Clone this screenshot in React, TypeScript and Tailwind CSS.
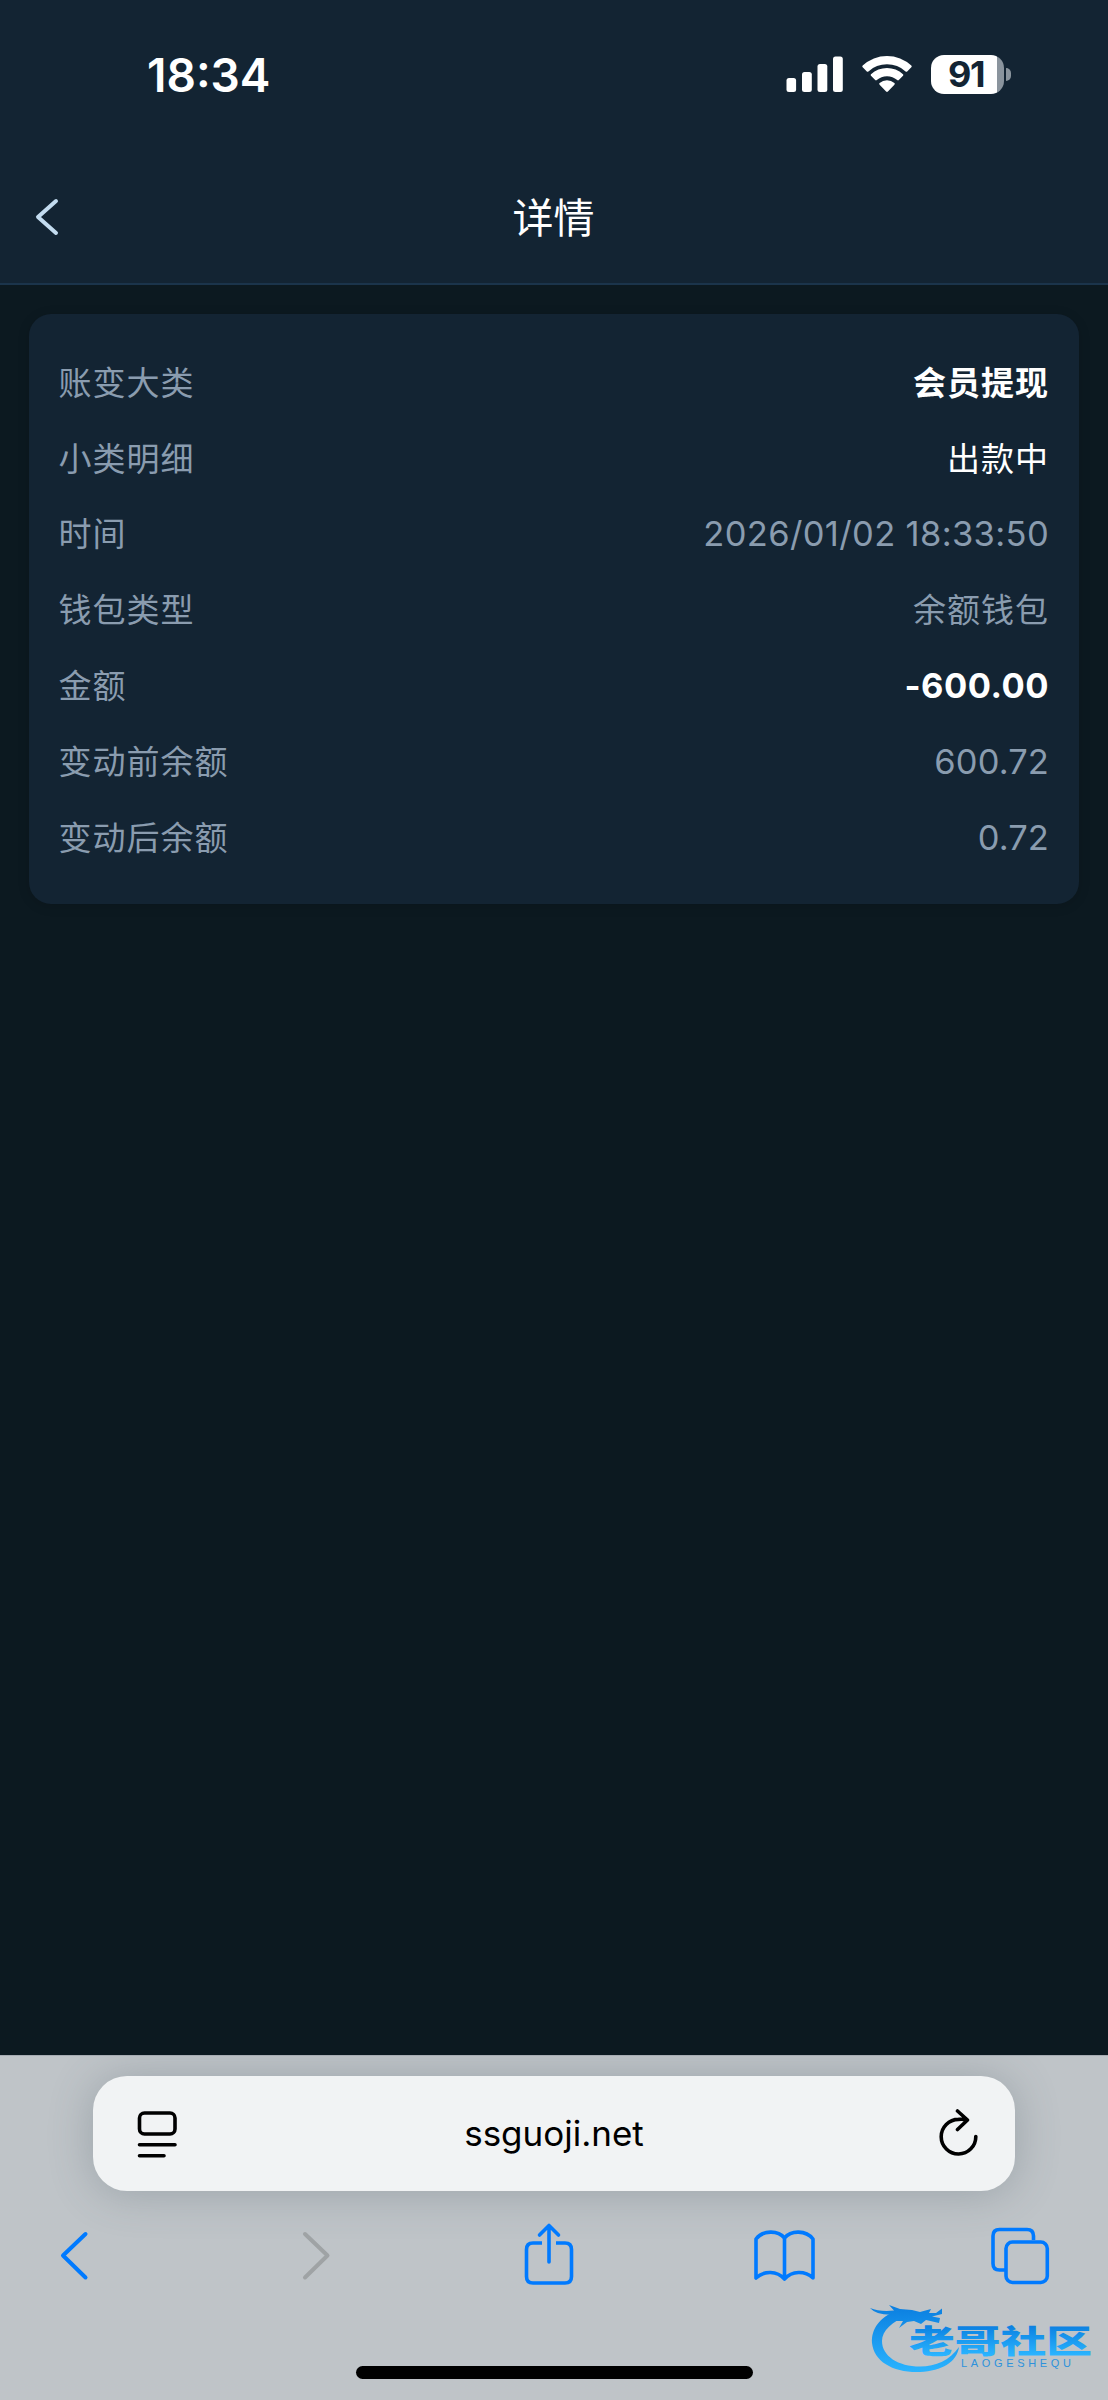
import React from "react";

interface DetailRow {
  label: string;
  value: string;
  style: string;
}

const rows: DetailRow[] = [
  { label: "账变大类", value: "会员提现", style: "pt-[3px] text-white font-bold" },
  { label: "小类明细", value: "出款中", style: "pt-[3px] text-white" },
  { label: "时间", value: "2026/01/02 18:33:50", style: "pt-px text-[34.5px] tracking-[0.35px]" },
  { label: "钱包类型", value: "余额钱包", style: "pt-[3px]" },
  { label: "金额", value: "-600.00", style: "pt-px text-[34.5px] tracking-[0.5px] text-white font-bold" },
  { label: "变动前余额", value: "600.72", style: "pt-px text-[34.5px] tracking-[0.1px]" },
  { label: "变动后余额", value: "0.72", style: "pt-px text-[34.5px] tracking-[0.1px]" },
];

const StatusBar: React.FC = () => (
  <div className="flex h-[148px] items-center justify-between pl-[147px] pr-[97px]">
    <span className="pt-[2px] text-[46px] font-semibold leading-none">18:34</span>
    <div className="flex items-center">
      <svg width="58" height="40" viewBox="786 54 58 40" fill="white">
        <rect x="786.5" y="78" width="9.6" height="14" rx="2.5" />
        <rect x="802" y="72" width="9.8" height="20" rx="2.5" />
        <rect x="817.5" y="64" width="9.8" height="28" rx="2.5" />
        <rect x="833" y="56.5" width="9.8" height="35.5" rx="2.5" />
      </svg>
      <svg className="ml-[17px]" width="52" height="40" viewBox="861 54 52 40" fill="white">
        <path d="M862.7 65.6a35.5 35.5 0 0 1 48.6 0q.8.8 0 1.6l-4.1 4.2q-.8.8-1.6 0a27.5 27.5 0 0 0-37.2 0q-.8.8-1.6 0l-4.1-4.2q-.8-.8 0-1.6z" />
        <path d="M871 74.2a23.6 23.6 0 0 1 32 0q.8.8 0 1.6l-4.2 4.3q-.8.8-1.6 0a15.2 15.2 0 0 0-20.4 0q-.8.8-1.6 0l-4.2-4.3q-.8-.8 0-1.6z" />
        <path d="M879.6 83a11.5 11.5 0 0 1 14.8 0q.9.8 0 1.7l-6.5 6.8q-.9.9-1.8 0l-6.5-6.8q-.9-.9 0-1.7z" />
      </svg>
      <div className="ml-[18px] flex h-[39px] w-[73px] items-center justify-center rounded-[13px] bg-linear-to-r from-white from-90% to-[#8a949d] to-90% pr-[3px]">
        <span className="text-[36px] font-bold leading-none tracking-[-1.5px] text-[#132433]">91</span>
      </div>
      <div className="ml-0.5 h-[13px] w-[5px] rounded-r-full bg-[#8a949d]" />
    </div>
  </div>
);

const CommunityLogo: React.FC = () => (
  <svg className="absolute left-[864px] top-[2296px]" width="236" height="82" viewBox="864 2296 236 82">
    <defs>
      <linearGradient id="ring" gradientUnits="userSpaceOnUse" x1="0" y1="2306" x2="0" y2="2372">
        <stop offset="0" stopColor="#0b7fe0" />
        <stop offset="1" stopColor="#2ab4ff" />
      </linearGradient>
      <linearGradient id="word" x1="0" y1="0" x2="0" y2="1">
        <stop offset="0.2" stopColor="#0b7fe0" />
        <stop offset="0.85" stopColor="#2ab4ff" />
      </linearGradient>
    </defs>
    <g fill="url(#ring)">
      <path d="M896 2311C880 2317 871 2329 872 2343C874 2362 894 2373 920 2372C942 2371 957 2362 959 2347C950 2360 936 2366.5 920 2366.5C898 2366.5 882 2356 882 2341C882 2331 892 2321 908 2316Z" />
      <path d="M870 2308Q880 2312 894 2310.5L889 2305L900 2309L912 2310L920 2312L931 2309L929 2313L936 2313L942 2308.5L942 2314L932 2316.5L940 2318L939 2323L926 2320L921 2324L914 2321L907 2322L899 2328L903 2321L896 2321L896 2314.5Q877 2316 870 2308Z" />
    </g>
    <g fontFamily='"Noto Sans CJK SC", sans-serif'>
      <text transform="translate(909 2353) scale(1.43 1)" fontSize="32" fontWeight="900" fill="url(#word)" textLength="128" lengthAdjust="spacing">老哥社区</text>
    </g>
    <text x="961" y="2366.5" fontFamily='"Liberation Sans", sans-serif' fontSize="11" fill="#2d92dc" textLength="110">LAOGESHEQU</text>
  </svg>
);

const BrowserBar: React.FC = () => (
  <footer className="flex h-[345px] flex-col items-center overflow-hidden border-t border-[#a6abb2] bg-[#bfc4c8] pt-[20px]">
    <div className="flex h-[115px] w-[922px] shrink-0 items-center justify-between rounded-[34px] bg-[#f1f3f4] pl-[43px] pr-[36px] text-black shadow-[0_2px_44px_rgba(70,85,95,0.3)]">
      <svg width="42" height="48" viewBox="0 0 42 48" fill="none" stroke="currentColor" strokeWidth="3.6" strokeLinecap="round">
        <rect x="3.5" y="3" width="35.5" height="21" rx="5" />
        <path d="M3.5 34.8H39M3.5 45.7H28" />
      </svg>
      <span className="-ml-[7px] text-[35px] leading-none">ssguoji.net</span>
      <svg width="42" height="50" viewBox="937 2108 42 50" fill="none" stroke="currentColor" strokeWidth="3.6" strokeLinecap="round" strokeLinejoin="round">
        <path d="M975.8 2135.5A17.3 17.3 0 1 1 958.5 2118.4Q963 2118 967 2119M957.5 2110L967.5 2119L957.5 2128.5" />
      </svg>
    </div>
    <nav className="flex w-full items-center pl-[59px] pt-[31px] text-[#007aff]">
      <svg width="30" height="66" viewBox="59 2222 30 66" fill="none" stroke="currentColor" strokeWidth="4" strokeLinecap="round" strokeLinejoin="round">
        <path d="M85.5 2234L63 2255.5L85.5 2277.5" />
      </svg>
      <svg className="ml-[212px] text-[#9fa3a5]" width="30" height="66" viewBox="301 2222 30 66" fill="none" stroke="currentColor" strokeWidth="4" strokeLinecap="round" strokeLinejoin="round">
        <path d="M305 2234L327.5 2255.5L305 2277.5" />
      </svg>
      <svg className="ml-[192px]" width="52" height="66" viewBox="523 2222 52 66" fill="none" stroke="currentColor" strokeWidth="3.6" strokeLinejoin="round">
        <path d="M542 2243H533Q526.5 2243 526.5 2249.5V2276.5Q526.5 2283 533 2283H565Q571.5 2283 571.5 2276.5V2249.5Q571.5 2243 565 2243H556" />
        <path d="M549 2262V2226M539.5 2235L549 2225.5L558.5 2235" strokeLinecap="round" />
      </svg>
      <svg className="ml-[178px]" width="64" height="66" viewBox="753 2222 64 66" fill="none" stroke="currentColor" strokeWidth="3.6" strokeLinecap="round" strokeLinejoin="round">
        <path d="M784.5 2238V2279C777 2270.5 764 2270.5 756 2278V2239C763 2230 778 2230 784.5 2238C791 2230 806 2230 813 2239V2278C805 2270.5 792 2270.5 784.5 2279" />
      </svg>
      <svg className="ml-[173px]" width="60" height="66" viewBox="990 2222 60 66" fill="none" stroke="currentColor" strokeWidth="3.6">
        <rect x="1006" y="2242" width="41.3" height="40.5" rx="6.5" />
        <path d="M1005 2270H999.5Q993 2270 993 2263.5V2236Q993 2229.5 999.5 2229.5H1027Q1033.5 2229.5 1033.5 2236V2240" />
      </svg>
    </nav>
    <div className="mt-[78px] h-[13px] w-[397px] shrink-0 rounded-full bg-black" />
  </footer>
);

const App: React.FC = () => {
  return (
    <div className="relative flex h-[2400px] w-[1108px] flex-col overflow-hidden bg-[#0c1920] font-[Inter,'Noto_Sans_CJK_SC',sans-serif] text-white">
      <header className="h-[285px] border-b-2 border-[#1b344b] bg-[#132433]">
        <StatusBar />
        <div className="grid h-[137px] grid-cols-3 items-center px-[34px]">
          <svg width="27" height="40" viewBox="34 197 27 40" fill="none" stroke="#c3dcf0" strokeWidth="4" strokeLinecap="round" strokeLinejoin="round">
            <path d="M56 201L38 217L56 233" />
          </svg>
          <h1 className="pr-px pt-[3px] text-center text-[41px] leading-none">详情</h1>
        </div>
      </header>

      {/* Transaction details */}
      <main className="flex-1 px-[29px] pt-[29px]">
        <div className="rounded-[22px] bg-[#132433] pb-[29px] pl-[29.5px] pr-[30px] pt-[30px] shadow-[0_2px_12px_rgba(0,0,0,0.15)]">
          {rows.map((row) => (
            <div key={row.label} className="flex h-[75.86px] items-center justify-between text-[33px] tracking-[1px] text-[#8a9caf]">
              <span className="pt-[3px]">{row.label}</span>
              <span className={row.style}>{row.value}</span>
            </div>
          ))}
        </div>
      </main>

      <BrowserBar />
      <CommunityLogo />
    </div>
  );
};

export default App;
